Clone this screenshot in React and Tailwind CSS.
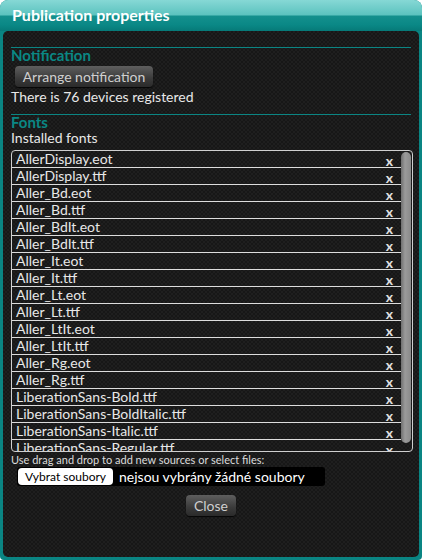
import React from "react";

const fonts = [
  "AllerDisplay.eot",
  "AllerDisplay.ttf",
  "Aller_Bd.eot",
  "Aller_Bd.ttf",
  "Aller_BdIt.eot",
  "Aller_BdIt.ttf",
  "Aller_It.eot",
  "Aller_It.ttf",
  "Aller_Lt.eot",
  "Aller_Lt.ttf",
  "Aller_LtIt.eot",
  "Aller_LtIt.ttf",
  "Aller_Rg.eot",
  "Aller_Rg.ttf",
  "LiberationSans-Bold.ttf",
  "LiberationSans-BoldItalic.ttf",
  "LiberationSans-Italic.ttf",
  "LiberationSans-Regular.ttf",
];

export default function App() {
  return (
    <div className="w-[422px] h-[560px] bg-white font-['Lato','Open_Sans',sans-serif]">
      <div className="flex flex-col h-full rounded-t-[8px] rounded-b-[4px] bg-[#0a8583] overflow-hidden">

        {/* TITLE BAR */}
        <div className="h-[31px] px-[12px] pt-[6px] bg-[linear-gradient(to_bottom,#86d8d5_0%,#5cc3bf_48%,#14908d_52%,#0a8886_80%,#067a78_100%)]">
          <h1 className="text-[16px] leading-[18px] font-bold text-white">Publication properties</h1>
        </div>

        {/* BODY */}
        <div className="flex-1 mx-[3px] mb-[3px] rounded-[5px] px-[8px] pt-[16px] bg-[#1b1b1b] bg-[conic-gradient(#1f1f1f_25%,#171717_0_50%,#1f1f1f_0_75%,#171717_0)] bg-[length:4px_4px] text-[#e8e8e8]">

          {/* NOTIFICATION */}
          <div className="border-t border-[#0b8583]" />
          <h2 className="text-[15px] leading-[14px] font-bold text-[#0a8784]">Notification</h2>
          <button className="ml-[4px] mt-[4px] h-[21px] w-[138px] rounded-[4px] text-[14px] leading-[21px] text-[#cfcfcf] bg-[linear-gradient(to_bottom,#5e5e5e,#3a3a3a_60%,#2a2a2a)] shadow-[0_1px_1px_rgba(0,0,0,0.8)]">
            Arrange notification
          </button>
          <p className="text-[14px] leading-[18px]">There is 76 devices registered</p>

          {/* FONTS */}
          <div className="mt-[8px] border-t border-[#0b8583]" />
          <h2 className="text-[15px] leading-[14px] font-bold text-[#0a8784]">Fonts</h2>
          <p className="text-[14px] leading-[16px] mt-[1px]">Installed fonts</p>

          <div className="mt-[4px] -mr-[2px] h-[302px] flex rounded-[4px] border border-[#cfcfcf] overflow-hidden">
            <ul className="flex-1 overflow-hidden">
              {fonts.map((f) => (
                <li
                  key={f}
                  className="h-[17px] flex items-center justify-between pl-[4px] pr-[8px] border-b border-[#dcdcdc] text-[14px] leading-[16px]"
                >
                  <span>{f}</span>
                  <span className="font-bold text-[#e0e0e0] text-[14px] pt-[3px]">x</span>
                </li>
              ))}
            </ul>
            <div className="w-[11px] pt-[1px] pb-[8px] pr-[1px]">
              <div className="h-full rounded-[5px] bg-[linear-gradient(to_right,#6f6f6f,#9a9a9a_40%,#8a8a8a)]" />
            </div>
          </div>

          {/* UPLOAD */}
          <p className="mt-[1px] text-[11px] leading-[14px] text-[#dcdcdc]">
            Use drag and drop to add new sources or select files:
          </p>
          <div className="ml-[6px] w-[308px] h-[19px] flex items-center rounded-[3px] bg-black">
            <button className="h-[17px] w-[95px] ml-[1px] rounded-[4px] bg-white text-black text-[12px] leading-[17px]">
              Vybrat soubory
            </button>
            <span className="ml-[6px] text-[14px] leading-[18px] text-white">nejsou vybrány žádné soubory</span>
          </div>

          <div className="flex justify-center mt-[9px]">
            <button className="h-[21px] px-[8px] rounded-[4px] text-[14px] leading-[21px] text-[#cfcfcf] bg-[linear-gradient(to_bottom,#5e5e5e,#3a3a3a_60%,#2a2a2a)] shadow-[0_1px_1px_rgba(0,0,0,0.8)]">
              Close
            </button>
          </div>
        </div>
      </div>
    </div>
  );
}
